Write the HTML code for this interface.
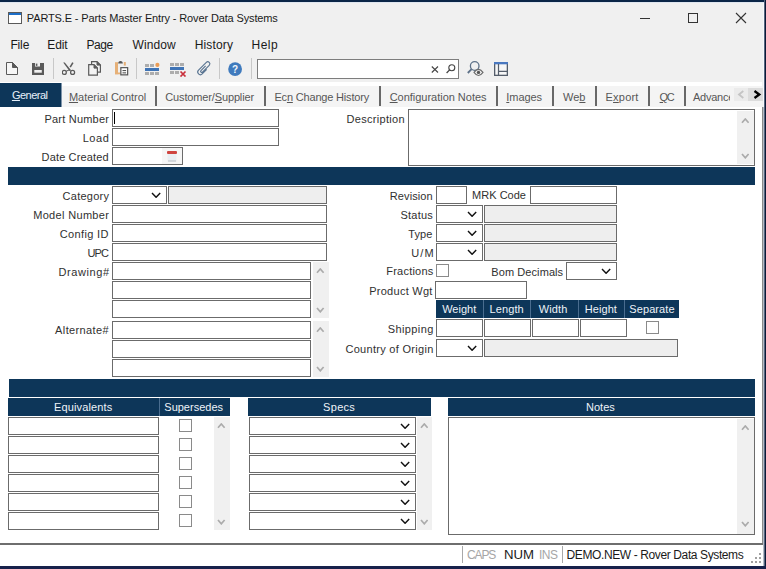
<!DOCTYPE html>
<html><head><meta charset="utf-8"><title>PARTS.E - Parts Master Entry</title>
<style>
html,body{margin:0;padding:0;width:766px;height:569px;overflow:hidden;background:#f0f0f0}
body{position:relative;font-family:"Liberation Sans",sans-serif}
.r,.b,.t,.s{position:absolute}
.b{border:1px solid #6b6b6b;box-sizing:content-box}
.t{white-space:nowrap}
u{text-decoration:underline;text-underline-offset:1px}
</style></head><body>
<div class="r" style="left:0px;top:0px;width:766px;height:569px;background:#f0f0f0;"></div>
<div class="r" style="left:0px;top:0px;width:766px;height:2px;background:#0a2547;"></div>
<div class="r" style="left:0px;top:2px;width:764px;height:1px;background:#dfe6ef;"></div>
<div class="r" style="left:763px;top:3px;width:1px;height:104px;background:#f5f8fc;"></div>
<div class="r" style="left:764px;top:0px;width:1px;height:569px;background:#56667f;"></div>
<div class="r" style="left:765px;top:0px;width:1px;height:569px;background:#0b1a38;"></div>
<div class="r" style="left:0px;top:566px;width:766px;height:3px;background:#17214b;"></div>
<svg class="s" style="left:8px;top:12px" width="15" height="13"><rect x="0.5" y="0.5" width="13" height="11" fill="#fff" stroke="#5a5a5a"/><rect x="1" y="1" width="12" height="2" fill="#1e6fc8"/></svg>
<div class="t" style="left:26.80px;top:12px;font-size:11px;line-height:13px;color:#1a1a1a;letter-spacing:-0.135px;">PARTS.E - Parts Master Entry - Rover Data Systems</div>
<div class="r" style="left:640px;top:18px;width:10px;height:1px;background:#333;"></div>
<div class="b" style="left:688px;top:13px;width:8px;height:8px;border-color:#333;background:transparent"></div>
<svg class="s" style="left:735px;top:12px" width="12" height="12"><path d="M1 1 L11 11 M11 1 L1 11" stroke="#333" stroke-width="1.1"/></svg>
<div class="t" style="left:10.40px;top:38px;font-size:12px;line-height:14px;color:#1a1a1a;letter-spacing:-0.133px;">File</div>
<div class="t" style="left:47.30px;top:38px;font-size:12px;line-height:14px;color:#1a1a1a;letter-spacing:-0.167px;">Edit</div>
<div class="t" style="left:86.40px;top:38px;font-size:12px;line-height:14px;color:#1a1a1a;letter-spacing:-0.400px;">Page</div>
<div class="t" style="left:132.50px;top:38px;font-size:12px;line-height:14px;color:#1a1a1a;letter-spacing:0.100px;">Window</div>
<div class="t" style="left:194.70px;top:38px;font-size:12px;line-height:14px;color:#1a1a1a;letter-spacing:0.167px;">History</div>
<div class="t" style="left:251.50px;top:38px;font-size:12px;line-height:14px;color:#1a1a1a;letter-spacing:0.467px;">Help</div>
<div class="r" style="left:53px;top:58px;width:1px;height:21px;background:#c8c8c8;"></div>
<div class="r" style="left:136px;top:58px;width:1px;height:21px;background:#c8c8c8;"></div>
<div class="r" style="left:219px;top:58px;width:1px;height:21px;background:#c8c8c8;"></div>
<div class="r" style="left:251px;top:58px;width:1px;height:21px;background:#c8c8c8;"></div>
<svg class="s" style="left:6px;top:62px" width="12" height="14"><path d="M0.5 0.5 H6.5 L11.5 5.5 V12.5 H0.5 Z" fill="#f6f6f6" stroke="#5a5a5a"/><path d="M6.5 0.5 V5.5 H11.5 Z" fill="#5a5a5a" stroke="#5a5a5a" stroke-linejoin="round"/></svg>
<svg class="s" style="left:32px;top:63px" width="12" height="12"><rect x="0" y="0" width="12" height="12" fill="#5a5a5a"/><rect x="3" y="0" width="5" height="3.5" fill="#f0f0f0"/><rect x="3.8" y="0.6" width="1.6" height="2.3" fill="#5a5a5a"/><rect x="2.3" y="7" width="7.5" height="2.7" fill="#f0f0f0"/></svg>
<svg class="s" style="left:62px;top:62px" width="14" height="14"><circle cx="2.3" cy="10.4" r="2" fill="none" stroke="#5a5a5a" stroke-width="1.25"/><circle cx="10.6" cy="10.4" r="2" fill="none" stroke="#5a5a5a" stroke-width="1.25"/><path d="M1.2 0.6 L2.8 0.5 L9.3 8.6 L7.4 9.1 Z" fill="#5a5a5a"/><path d="M10.9 0.7 L8.2 5.1" stroke="#5a5a5a" stroke-width="1.6"/><path d="M7.5 7.8 L4 9.3" stroke="#5a5a5a" stroke-width="1"/></svg>
<svg class="s" style="left:88px;top:61px" width="14" height="16"><path d="M3.6 0.7 H9.0 L12.4 4.1 V11.2 H3.6 Z" fill="#f3f3f3" stroke="#5a5a5a" stroke-width="1.2"/><path d="M9.0 0.7 V4.1 H12.4 Z" fill="#5a5a5a" stroke="#5a5a5a" stroke-width="1"/><path d="M0.7 3.7 H6.0 L9.4 7.1 V14.1 H0.7 Z" fill="#f3f3f3" stroke="#5a5a5a" stroke-width="1.2"/><path d="M6.0 3.7 V7.1 H9.4 Z" fill="#5a5a5a" stroke="#5a5a5a" stroke-width="1"/></svg>
<svg class="s" style="left:114px;top:60px" width="15" height="17"><rect x="1" y="2.2" width="3" height="12" fill="#e6b077"/><rect x="1" y="12.5" width="5.5" height="1.8" fill="#e6b077"/><rect x="9.8" y="2" width="2" height="3.6" fill="#e6b077"/><path d="M4.2 3.6 Q4.2 0.9 6.5 0.9 Q8.8 0.9 8.8 3.6 Z" fill="#555"/><rect x="6.85" y="7.65" width="6.8" height="7.2" fill="#fff" stroke="#555" stroke-width="1.2"/><rect x="8.5" y="10" width="3.6" height="1.1" fill="#555"/><rect x="8.5" y="12.3" width="3.6" height="1.1" fill="#555"/></svg>
<svg class="s" style="left:145px;top:62px" width="15" height="14"><rect x="0" y="2" width="4" height="3" fill="#adadad"/><rect x="5" y="2" width="4" height="3" fill="#adadad"/><circle cx="12.4" cy="2.9" r="2.1" fill="#eb9c55"/><rect x="0" y="6" width="14" height="3" fill="#3f74b6"/><rect x="0" y="10" width="4" height="3" fill="#adadad"/><rect x="5" y="10" width="4" height="3" fill="#adadad"/><rect x="10" y="10" width="4" height="3" fill="#adadad"/></svg>
<svg class="s" style="left:170px;top:63px" width="17" height="14"><rect x="0" y="0" width="4" height="3" fill="#adadad"/><rect x="5" y="0" width="4" height="3" fill="#adadad"/><rect x="10" y="0" width="4" height="3" fill="#adadad"/><rect x="0" y="4" width="14" height="3" fill="#3f74b6"/><rect x="0" y="8" width="4" height="3" fill="#adadad"/><rect x="5" y="8" width="4" height="3" fill="#adadad"/><path d="M10.5 8.5 L15.5 13.5 M15.5 8.5 L10.5 13.5" stroke="#c9303c" stroke-width="1.7"/></svg>
<svg class="s" style="left:194px;top:58px" width="20" height="20"><g transform="translate(10.2 10.2) rotate(45)"><path d="M2.6 -1 V5.4 A2.6 2.6 0 0 1 -2.6 5.4 V-5.6 A2.05 2.05 0 0 1 1.5 -5.6 V4 A1.05 1.05 0 0 1 -0.6 4 V-2.6" fill="none" stroke="#5a7592" stroke-width="1.15"/></g></svg>
<svg class="s" style="left:228px;top:62px" width="15" height="15"><circle cx="7.1" cy="7.1" r="6.9" fill="#3f7abd"/><text x="7.1" y="10.9" font-family="Liberation Sans" font-weight="bold" font-size="10" fill="#f2f6fb" text-anchor="middle">?</text></svg>
<div class="b" style="left:257px;top:59px;width:200px;height:18px;background:#fff;border-color:#7d7d7d;"></div>
<svg class="s" style="left:431px;top:66px" width="8" height="7"><path d="M0.8 0.5 L7 6.5 M7 0.5 L0.8 6.5" stroke="#444" stroke-width="1.1"/></svg>
<svg class="s" style="left:446px;top:64px" width="10" height="10"><circle cx="5.8" cy="3.7" r="3" fill="none" stroke="#444" stroke-width="1.1"/><path d="M3.6 5.9 L0.6 9" stroke="#444" stroke-width="1.3"/></svg>
<svg class="s" style="left:466px;top:60px" width="19" height="17"><circle cx="8.7" cy="6" r="4.3" fill="none" stroke="#5d7188" stroke-width="1.3"/><path d="M5.6 9.2 L1.8 13" stroke="#5d7188" stroke-width="1.8"/><path d="M8 12.4 Q12.5 6.3 17 12.4 Q12.5 18.5 8 12.4 Z" fill="#f4f4f4" stroke="#6a6a6a" stroke-width="1.1"/><circle cx="12.5" cy="12.4" r="1.7" fill="#555"/></svg>
<svg class="s" style="left:494px;top:62px" width="14" height="14"><rect x="0.65" y="0.65" width="12.7" height="12.7" fill="#f7f7f7" stroke="#555e6b" stroke-width="1.3"/><rect x="0" y="0" width="14" height="2.3" fill="#4a78c0"/><path d="M4.5 2 V13.5 M4.5 9.4 H13.5" stroke="#555e6b" stroke-width="1.2"/></svg>
<div class="r" style="left:0px;top:82px;width:762px;height:4px;background:#ffffff;"></div>
<div class="r" style="left:0px;top:86px;width:762px;height:21px;background:#f4f4f4;"></div>
<div class="r" style="left:0px;top:83px;width:61px;height:24px;background:#0d3659;"></div>
<div class="r" style="left:61px;top:83px;width:1px;height:24px;background:#7f94aa;"></div>
<div class="r" style="left:155px;top:86px;width:2px;height:20px;background:#686868;"></div>
<div class="r" style="left:264px;top:86px;width:2px;height:20px;background:#686868;"></div>
<div class="r" style="left:379px;top:86px;width:2px;height:20px;background:#686868;"></div>
<div class="r" style="left:496px;top:86px;width:2px;height:20px;background:#686868;"></div>
<div class="r" style="left:552px;top:86px;width:2px;height:20px;background:#686868;"></div>
<div class="r" style="left:595px;top:86px;width:2px;height:20px;background:#686868;"></div>
<div class="r" style="left:648px;top:86px;width:2px;height:20px;background:#686868;"></div>
<div class="r" style="left:684px;top:86px;width:2px;height:20px;background:#686868;"></div>
<div class="t" style="left:11.90px;top:89px;font-size:11px;line-height:13px;color:#e6f0fa;letter-spacing:-0.500px;"><u>G</u>eneral</div>
<div class="t" style="left:68.90px;top:91px;font-size:11px;line-height:13px;color:#575757;letter-spacing:-0.020px;"><u>M</u>aterial Control</div>
<div class="t" style="left:165.30px;top:91px;font-size:11px;line-height:13px;color:#575757;letter-spacing:-0.144px;">Customer/<u>S</u>upplier</div>
<div class="t" style="left:274.40px;top:91px;font-size:11px;line-height:13px;color:#575757;letter-spacing:-0.176px;">Ec<u>n</u> Change History</div>
<div class="t" style="left:389.70px;top:91px;font-size:11px;line-height:13px;color:#575757;letter-spacing:-0.022px;"><u>C</u>onfiguration Notes</div>
<div class="t" style="left:506.30px;top:91px;font-size:11px;line-height:13px;color:#575757;letter-spacing:-0.060px;"><u>I</u>mages</div>
<div class="t" style="left:563.00px;top:91px;font-size:11px;line-height:13px;color:#575757;letter-spacing:0.000px;">We<u>b</u></div>
<div class="t" style="left:605.50px;top:91px;font-size:11px;line-height:13px;color:#575757;letter-spacing:0.220px;">E<u>x</u>port</div>
<div class="t" style="left:659.60px;top:91px;font-size:11px;line-height:13px;color:#575757;letter-spacing:-1.300px;"><u>Q</u>C</div>
<div style="position:absolute;left:692px;top:86px;width:38px;height:20px;overflow:hidden"><div class="t" style="left:1px;top:5px;font-size:11px;line-height:13px;letter-spacing:-0.25px;color:#575757">Advanced</div></div>
<div class="r" style="left:734px;top:88px;width:14px;height:13px;background:#ebebeb;"></div>
<div class="r" style="left:748px;top:88px;width:15px;height:13px;background:#dcdcdc;"></div>
<svg class="s" style="left:734px;top:88px" width="29" height="13"><path d="M743.3 3 L739 6.5 L743.3 10" transform="translate(-734 0)" fill="none" stroke="#c4c4c4" stroke-width="1.8"/><path d="M754.5 3 L759.3 6.5 L754.5 10" transform="translate(-734 0)" fill="none" stroke="#000" stroke-width="2.3"/></svg>
<div class="r" style="left:0px;top:107px;width:762px;height:437px;background:#ffffff;"></div>
<div class="r" style="left:762px;top:107px;width:1px;height:437px;background:#8a8a8a;"></div>
<div class="t" style="left:44.40px;top:113px;font-size:11px;line-height:13px;color:#303030;letter-spacing:0.220px;">Part Number</div>
<div class="b" style="left:112px;top:109px;width:165px;height:16px;background:#fff;border-color:#6b6b6b;"></div>
<div class="r" style="left:114px;top:112px;width:1px;height:12px;background:#000;"></div>
<div class="t" style="left:82.70px;top:132px;font-size:11px;line-height:13px;color:#303030;letter-spacing:0.567px;">Load</div>
<div class="b" style="left:112px;top:128px;width:165px;height:16px;background:#fff;border-color:#6b6b6b;"></div>
<div class="t" style="left:41.60px;top:151px;font-size:11px;line-height:13px;color:#303030;letter-spacing:0.145px;">Date Created</div>
<div class="b" style="left:112px;top:147px;width:69px;height:16px;background:#fff;border-color:#6b6b6b;"></div>
<div class="r" style="left:162px;top:148px;width:20px;height:16px;background:#f6f6f6;"></div>
<svg class="s" style="left:166px;top:150px" width="12" height="13"><rect x="1" y="1" width="10" height="3" rx="1" fill="#cf4540"/><rect x="1.5" y="4" width="9" height="7.5" fill="#e9eef2"/><rect x="2" y="10.5" width="8" height="1" fill="#b9bec4"/></svg>
<div class="t" style="left:346.50px;top:113px;font-size:11px;line-height:13px;color:#303030;letter-spacing:0.310px;">Description</div>
<div class="b" style="left:408px;top:109px;width:345px;height:55px;background:#fff;border-color:#6b6b6b;"></div>
<div class="r" style="left:737px;top:111px;width:17px;height:53px;background:#f0f0f0;"></div>
<svg class="s" style="left:740.8000000000001px;top:118.1px" width="8.6" height="5.8"><path d="M1 4.8 L4.3 1 L7.6 4.8" fill="none" stroke="#ababab" stroke-width="1.7"/></svg>
<svg class="s" style="left:740.8000000000001px;top:153.1px" width="8.6" height="5.8"><path d="M1 1 L4.3 4.8 L7.6 1" fill="none" stroke="#ababab" stroke-width="1.7"/></svg>
<div class="r" style="left:8px;top:167px;width:747px;height:18px;background:#0d3659;"></div>
<div class="t" style="left:62.60px;top:190px;font-size:11px;line-height:13px;color:#303030;letter-spacing:0.257px;">Category</div>
<div class="b" style="left:112px;top:186px;width:53px;height:16px;background:#fff;border-color:#6b6b6b;"></div>
<svg class="s" style="left:151.3px;top:192.2px" width="10.2" height="6.3"><path d="M1 1 L5.1 5.3 L9.2 1" fill="none" stroke="#111" stroke-width="1.4"/></svg>
<div class="b" style="left:168px;top:186px;width:157px;height:16px;background:#eeeeee;border-color:#6b6b6b;"></div>
<div class="t" style="left:33.20px;top:209px;font-size:11px;line-height:13px;color:#303030;letter-spacing:0.327px;">Model Number</div>
<div class="b" style="left:112px;top:205px;width:213px;height:16px;background:#fff;border-color:#6b6b6b;"></div>
<div class="t" style="left:59.80px;top:228px;font-size:11px;line-height:13px;color:#303030;letter-spacing:0.350px;">Config ID</div>
<div class="b" style="left:112px;top:224px;width:213px;height:16px;background:#fff;border-color:#6b6b6b;"></div>
<div class="t" style="left:87.50px;top:247px;font-size:11px;line-height:13px;color:#303030;letter-spacing:-0.850px;">UPC</div>
<div class="b" style="left:112px;top:243px;width:213px;height:16px;background:#fff;border-color:#6b6b6b;"></div>
<div class="t" style="left:58.40px;top:266px;font-size:11px;line-height:13px;color:#303030;letter-spacing:0.600px;">Drawing#</div>
<div class="b" style="left:112px;top:262px;width:197px;height:16px;background:#fff;border-color:#6b6b6b;"></div>
<div class="b" style="left:112px;top:281px;width:197px;height:16px;background:#fff;border-color:#6b6b6b;"></div>
<div class="b" style="left:112px;top:300px;width:197px;height:16px;background:#fff;border-color:#6b6b6b;"></div>
<div class="r" style="left:313px;top:262px;width:16px;height:56px;background:#f0f0f0;"></div>
<svg class="s" style="left:316.3px;top:268.1px" width="8.6" height="5.8"><path d="M1 4.8 L4.3 1 L7.6 4.8" fill="none" stroke="#ababab" stroke-width="1.7"/></svg>
<svg class="s" style="left:316.3px;top:307.1px" width="8.6" height="5.8"><path d="M1 1 L4.3 4.8 L7.6 1" fill="none" stroke="#ababab" stroke-width="1.7"/></svg>
<div class="t" style="left:55.10px;top:324px;font-size:11px;line-height:13px;color:#303030;letter-spacing:0.378px;">Alternate#</div>
<div class="b" style="left:112px;top:321px;width:197px;height:16px;background:#fff;border-color:#6b6b6b;"></div>
<div class="b" style="left:112px;top:340px;width:197px;height:16px;background:#fff;border-color:#6b6b6b;"></div>
<div class="b" style="left:112px;top:359px;width:197px;height:16px;background:#fff;border-color:#6b6b6b;"></div>
<div class="r" style="left:313px;top:321px;width:16px;height:56px;background:#f0f0f0;"></div>
<svg class="s" style="left:316.3px;top:327.1px" width="8.6" height="5.8"><path d="M1 4.8 L4.3 1 L7.6 4.8" fill="none" stroke="#ababab" stroke-width="1.7"/></svg>
<svg class="s" style="left:316.3px;top:366.1px" width="8.6" height="5.8"><path d="M1 1 L4.3 4.8 L7.6 1" fill="none" stroke="#ababab" stroke-width="1.7"/></svg>
<div class="t" style="left:389.80px;top:190px;font-size:11px;line-height:13px;color:#303030;letter-spacing:0.100px;">Revision</div>
<div class="b" style="left:436px;top:186px;width:29px;height:16px;background:#fff;border-color:#6b6b6b;"></div>
<div class="t" style="left:472.10px;top:189px;font-size:11px;line-height:13px;color:#303030;letter-spacing:0.014px;">MRK Code</div>
<div class="b" style="left:530px;top:186px;width:85px;height:16px;background:#fff;border-color:#6b6b6b;"></div>
<div class="t" style="left:400.60px;top:209px;font-size:11px;line-height:13px;color:#303030;letter-spacing:0.180px;">Status</div>
<div class="b" style="left:436px;top:205px;width:45px;height:16px;background:#fff;border-color:#6b6b6b;"></div>
<svg class="s" style="left:467.29999999999995px;top:211.2px" width="10.2" height="6.3"><path d="M1 1 L5.1 5.3 L9.2 1" fill="none" stroke="#111" stroke-width="1.4"/></svg>
<div class="b" style="left:484px;top:205px;width:131px;height:16px;background:#eeeeee;border-color:#6b6b6b;"></div>
<div class="t" style="left:408.20px;top:228px;font-size:11px;line-height:13px;color:#303030;letter-spacing:0.100px;">Type</div>
<div class="b" style="left:436px;top:224px;width:45px;height:16px;background:#fff;border-color:#6b6b6b;"></div>
<svg class="s" style="left:467.29999999999995px;top:230.2px" width="10.2" height="6.3"><path d="M1 1 L5.1 5.3 L9.2 1" fill="none" stroke="#111" stroke-width="1.4"/></svg>
<div class="b" style="left:484px;top:224px;width:131px;height:16px;background:#eeeeee;border-color:#6b6b6b;"></div>
<div class="t" style="left:411.20px;top:247px;font-size:11px;line-height:13px;color:#303030;letter-spacing:1.150px;">U/M</div>
<div class="b" style="left:436px;top:243px;width:45px;height:16px;background:#fff;border-color:#6b6b6b;"></div>
<svg class="s" style="left:467.29999999999995px;top:249.2px" width="10.2" height="6.3"><path d="M1 1 L5.1 5.3 L9.2 1" fill="none" stroke="#111" stroke-width="1.4"/></svg>
<div class="b" style="left:484px;top:243px;width:131px;height:16px;background:#eeeeee;border-color:#6b6b6b;"></div>
<div class="t" style="left:386.30px;top:265px;font-size:11px;line-height:13px;color:#303030;letter-spacing:0.212px;">Fractions</div>
<div class="b" style="left:436px;top:264px;width:11px;height:11px;background:#fff;border-color:#8a8a8a;"></div>
<div class="t" style="left:491.30px;top:266px;font-size:11px;line-height:13px;color:#303030;letter-spacing:0.082px;">Bom Decimals</div>
<div class="b" style="left:566px;top:262px;width:49px;height:16px;background:#fff;border-color:#6b6b6b;"></div>
<svg class="s" style="left:601.3px;top:268.20000000000005px" width="10.2" height="6.3"><path d="M1 1 L5.1 5.3 L9.2 1" fill="none" stroke="#111" stroke-width="1.4"/></svg>
<div class="t" style="left:369.20px;top:285px;font-size:11px;line-height:13px;color:#303030;letter-spacing:0.270px;">Product Wgt</div>
<div class="b" style="left:435px;top:281px;width:90px;height:16px;background:#fff;border-color:#6b6b6b;"></div>
<div class="r" style="left:436px;top:300px;width:243px;height:18px;background:#0d3659;"></div>
<div class="r" style="left:483px;top:300px;width:1px;height:18px;background:#4a6d8f;"></div>
<div class="r" style="left:530px;top:300px;width:1px;height:18px;background:#4a6d8f;"></div>
<div class="r" style="left:578px;top:300px;width:1px;height:18px;background:#4a6d8f;"></div>
<div class="r" style="left:624px;top:300px;width:1px;height:18px;background:#4a6d8f;"></div>
<div class="t" style="left:442.20px;top:303px;font-size:11px;line-height:13px;color:#eef3f8;letter-spacing:0.000px;">Weight</div>
<div class="t" style="left:489.60px;top:303px;font-size:11px;line-height:13px;color:#eef3f8;letter-spacing:0.080px;">Length</div>
<div class="t" style="left:538.80px;top:303px;font-size:11px;line-height:13px;color:#eef3f8;letter-spacing:0.100px;">Width</div>
<div class="t" style="left:584.80px;top:303px;font-size:11px;line-height:13px;color:#eef3f8;letter-spacing:0.060px;">Height</div>
<div class="t" style="left:629.30px;top:303px;font-size:11px;line-height:13px;color:#eef3f8;letter-spacing:0.086px;">Separate</div>
<div class="t" style="left:387.70px;top:323px;font-size:11px;line-height:13px;color:#303030;letter-spacing:0.400px;">Shipping</div>
<div class="b" style="left:436px;top:319px;width:45px;height:16px;background:#fff;border-color:#6b6b6b;"></div>
<div class="b" style="left:484px;top:319px;width:45px;height:16px;background:#fff;border-color:#6b6b6b;"></div>
<div class="b" style="left:532px;top:319px;width:45px;height:16px;background:#fff;border-color:#6b6b6b;"></div>
<div class="b" style="left:580px;top:319px;width:45px;height:16px;background:#fff;border-color:#6b6b6b;"></div>
<div class="b" style="left:646px;top:321px;width:11px;height:11px;background:#fff;border-color:#8a8a8a;"></div>
<div class="t" style="left:345.40px;top:343px;font-size:11px;line-height:13px;color:#303030;letter-spacing:0.300px;">Country of Origin</div>
<div class="b" style="left:436px;top:339px;width:45px;height:16px;background:#fff;border-color:#6b6b6b;"></div>
<svg class="s" style="left:467.29999999999995px;top:345.20000000000005px" width="10.2" height="6.3"><path d="M1 1 L5.1 5.3 L9.2 1" fill="none" stroke="#111" stroke-width="1.4"/></svg>
<div class="b" style="left:484px;top:339px;width:192px;height:16px;background:#eeeeee;border-color:#6b6b6b;"></div>
<div class="r" style="left:9px;top:379px;width:746px;height:18px;background:#0d3659;"></div>
<div class="r" style="left:8px;top:398px;width:222px;height:18px;background:#0d3659;"></div>
<div class="r" style="left:159px;top:398px;width:1px;height:18px;background:#4a6d8f;"></div>
<div class="t" style="left:54.10px;top:401px;font-size:11px;line-height:13px;color:#eef3f8;letter-spacing:0.120px;">Equivalents</div>
<div class="t" style="left:164.30px;top:401px;font-size:11px;line-height:13px;color:#eef3f8;letter-spacing:0.000px;">Supersedes</div>
<div class="r" style="left:248px;top:398px;width:183px;height:18px;background:#0d3659;"></div>
<div class="t" style="left:323.10px;top:401px;font-size:11px;line-height:13px;color:#eef3f8;letter-spacing:0.300px;">Specs</div>
<div class="r" style="left:448px;top:398px;width:307px;height:18px;background:#0d3659;"></div>
<div class="t" style="left:585.90px;top:401px;font-size:11px;line-height:13px;color:#eef3f8;letter-spacing:0.050px;">Notes</div>
<div class="b" style="left:8px;top:417px;width:149px;height:16px;background:#fff;border-color:#6b6b6b;"></div>
<div class="b" style="left:179px;top:419px;width:11px;height:11px;background:#fff;border-color:#8a8a8a;"></div>
<div class="b" style="left:249px;top:417px;width:165px;height:16px;background:#fff;border-color:#6b6b6b;"></div>
<svg class="s" style="left:400.29999999999995px;top:423.20000000000005px" width="10.2" height="6.3"><path d="M1 1 L5.1 5.3 L9.2 1" fill="none" stroke="#111" stroke-width="1.4"/></svg>
<div class="b" style="left:8px;top:436px;width:149px;height:16px;background:#fff;border-color:#6b6b6b;"></div>
<div class="b" style="left:179px;top:438px;width:11px;height:11px;background:#fff;border-color:#8a8a8a;"></div>
<div class="b" style="left:249px;top:436px;width:165px;height:16px;background:#fff;border-color:#6b6b6b;"></div>
<svg class="s" style="left:400.29999999999995px;top:442.20000000000005px" width="10.2" height="6.3"><path d="M1 1 L5.1 5.3 L9.2 1" fill="none" stroke="#111" stroke-width="1.4"/></svg>
<div class="b" style="left:8px;top:455px;width:149px;height:16px;background:#fff;border-color:#6b6b6b;"></div>
<div class="b" style="left:179px;top:457px;width:11px;height:11px;background:#fff;border-color:#8a8a8a;"></div>
<div class="b" style="left:249px;top:455px;width:165px;height:16px;background:#fff;border-color:#6b6b6b;"></div>
<svg class="s" style="left:400.29999999999995px;top:461.20000000000005px" width="10.2" height="6.3"><path d="M1 1 L5.1 5.3 L9.2 1" fill="none" stroke="#111" stroke-width="1.4"/></svg>
<div class="b" style="left:8px;top:474px;width:149px;height:16px;background:#fff;border-color:#6b6b6b;"></div>
<div class="b" style="left:179px;top:476px;width:11px;height:11px;background:#fff;border-color:#8a8a8a;"></div>
<div class="b" style="left:249px;top:474px;width:165px;height:16px;background:#fff;border-color:#6b6b6b;"></div>
<svg class="s" style="left:400.29999999999995px;top:480.20000000000005px" width="10.2" height="6.3"><path d="M1 1 L5.1 5.3 L9.2 1" fill="none" stroke="#111" stroke-width="1.4"/></svg>
<div class="b" style="left:8px;top:493px;width:149px;height:16px;background:#fff;border-color:#6b6b6b;"></div>
<div class="b" style="left:179px;top:495px;width:11px;height:11px;background:#fff;border-color:#8a8a8a;"></div>
<div class="b" style="left:249px;top:493px;width:165px;height:16px;background:#fff;border-color:#6b6b6b;"></div>
<svg class="s" style="left:400.29999999999995px;top:499.20000000000005px" width="10.2" height="6.3"><path d="M1 1 L5.1 5.3 L9.2 1" fill="none" stroke="#111" stroke-width="1.4"/></svg>
<div class="b" style="left:8px;top:512px;width:149px;height:16px;background:#fff;border-color:#6b6b6b;"></div>
<div class="b" style="left:179px;top:514px;width:11px;height:11px;background:#fff;border-color:#8a8a8a;"></div>
<div class="b" style="left:249px;top:512px;width:165px;height:16px;background:#fff;border-color:#6b6b6b;"></div>
<svg class="s" style="left:400.29999999999995px;top:518.2px" width="10.2" height="6.3"><path d="M1 1 L5.1 5.3 L9.2 1" fill="none" stroke="#111" stroke-width="1.4"/></svg>
<div class="r" style="left:214px;top:417px;width:16px;height:113px;background:#f0f0f0;"></div>
<svg class="s" style="left:217.29999999999998px;top:423.1px" width="8.6" height="5.8"><path d="M1 4.8 L4.3 1 L7.6 4.8" fill="none" stroke="#ababab" stroke-width="1.7"/></svg>
<svg class="s" style="left:217.29999999999998px;top:519.1px" width="8.6" height="5.8"><path d="M1 1 L4.3 4.8 L7.6 1" fill="none" stroke="#ababab" stroke-width="1.7"/></svg>
<div class="r" style="left:417px;top:417px;width:15px;height:113px;background:#f0f0f0;"></div>
<svg class="s" style="left:419.8px;top:423.1px" width="8.6" height="5.8"><path d="M1 4.8 L4.3 1 L7.6 4.8" fill="none" stroke="#ababab" stroke-width="1.7"/></svg>
<svg class="s" style="left:419.8px;top:519.1px" width="8.6" height="5.8"><path d="M1 1 L4.3 4.8 L7.6 1" fill="none" stroke="#ababab" stroke-width="1.7"/></svg>
<div class="b" style="left:448px;top:417px;width:305px;height:116px;background:#fff;border-color:#6b6b6b;"></div>
<div class="r" style="left:737px;top:419px;width:17px;height:115px;background:#f0f0f0;"></div>
<svg class="s" style="left:740.8000000000001px;top:425.1px" width="8.6" height="5.8"><path d="M1 4.8 L4.3 1 L7.6 4.8" fill="none" stroke="#ababab" stroke-width="1.7"/></svg>
<svg class="s" style="left:740.8000000000001px;top:521.1px" width="8.6" height="5.8"><path d="M1 1 L4.3 4.8 L7.6 1" fill="none" stroke="#ababab" stroke-width="1.7"/></svg>
<div class="r" style="left:0px;top:543px;width:763px;height:2px;background:#6e6e6e;"></div>
<div class="r" style="left:0px;top:545px;width:763px;height:21px;background:#ffffff;"></div>
<div class="r" style="left:763px;top:107px;width:1px;height:459px;background:#b4bbc6;"></div>
<div class="r" style="left:462px;top:546px;width:1px;height:17px;background:#a8a8a8;"></div>
<div class="r" style="left:562px;top:546px;width:1px;height:17px;background:#a8a8a8;"></div>
<div class="t" style="left:466.90px;top:548px;font-size:12px;line-height:14px;color:#a6a6a6;letter-spacing:-1.067px;">CAPS</div>
<div class="t" style="left:504px;top:548px;font-size:12px;line-height:14px;color:#1a1a1a;transform:scaleX(1.1);transform-origin:0 0">NUM</div>
<div class="t" style="left:539.00px;top:548px;font-size:12px;line-height:14px;color:#a6a6a6;letter-spacing:-0.500px;">INS</div>
<div class="t" style="left:566.60px;top:548px;font-size:12px;line-height:14px;color:#1a1a1a;letter-spacing:-0.389px;">DEMO.NEW - Rover Data Systems</div>
<div class="r" style="left:759px;top:553px;width:2px;height:2px;background:#a0a0a0;"></div>
<div class="r" style="left:755px;top:557px;width:2px;height:2px;background:#a0a0a0;"></div>
<div class="r" style="left:759px;top:557px;width:2px;height:2px;background:#a0a0a0;"></div>
<div class="r" style="left:751px;top:561px;width:2px;height:2px;background:#a0a0a0;"></div>
<div class="r" style="left:755px;top:561px;width:2px;height:2px;background:#a0a0a0;"></div>
<div class="r" style="left:759px;top:561px;width:2px;height:2px;background:#a0a0a0;"></div>
</body></html>
